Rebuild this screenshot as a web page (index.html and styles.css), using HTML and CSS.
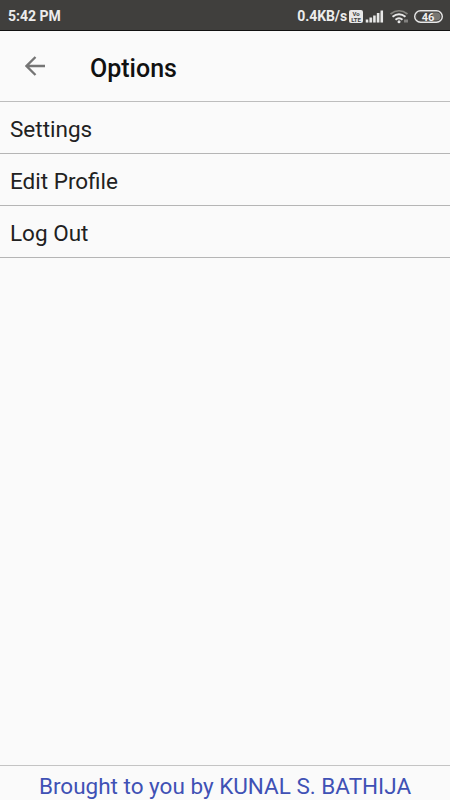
FILE: index.html
```html
<!DOCTYPE html>
<html lang="en">
<head>
<meta charset="utf-8">
<title>Options</title>
<link rel="stylesheet" href="styles.css">
</head>
<body>
<div class="status">
  <span class="time">5:42 PM</span>
  <span class="speed">0.4KB/s</span>
  <svg class="icons" width="95" height="30" viewBox="348 0 95 30">
    <rect x="349" y="9" width="14" height="13" rx="2" fill="#e8e8e8"/>
    <text class="volte"><tspan x="356" y="14.700">Vo</tspan><tspan x="356" y="20.900">LTE</tspan></text>
    <path d="M366 21.500L383 9.500v12z" fill="#85847f" opacity=".35"/>
    <path d="M367 18.500v3M370.700 16.500v5M374.400 14.500v7M378.100 12v9.500M381.800 9.500v12" stroke="#e8e8e8" stroke-width="2.500"/>
    <path d="M390.500 13q8.500-6.500 17 0" fill="none" stroke="#85847f" stroke-width="1.700"/>
    <path d="M392.500 15.800q6.500-5 13 0M395.500 18.800q3.500-3 7 0" fill="none" stroke="#e8e8e8" stroke-width="2"/>
    <circle cx="399" cy="20.700" r="1.500" fill="#e8e8e8"/>
    <path d="M405 18.500v3M407 18.500v3" stroke="#c4c4c2" stroke-width="1"/>
    <rect x="416.500" y="11.500" width="24" height="8" rx="4" fill="#777672"/>
    <path d="M420.500 11.500h12v8h-12a4 4 0 0 1 0-8z" fill="#403f3d"/>
    <rect x="414.700" y="9.700" width="27.600" height="11.600" rx="5.800" fill="none" stroke="#e8e8e8" stroke-width="1.400"/>
    <text x="428" y="19.500" class="battery">46</text>
  </svg>
</div>
<header class="header">
  <svg class="back" width="20" height="20" viewBox="0 0 20 20"><path d="M20 10H2M10.500 1L1.500 10l9 9" fill="none" stroke="#757575" stroke-width="2.300"/></svg>
  <h1 class="title">Options</h1>
</header>
<ul class="list">
  <li class="item">Settings</li>
  <li class="item">Edit Profile</li>
  <li class="item">Log Out</li>
</ul>
<footer class="footer">Brought to you by KUNAL S. BATHIJA</footer>
</body>
</html>
```

FILE: styles.css
```css
* { box-sizing: border-box; }
body { margin: 0; height: 800px; display: flex; flex-direction: column; overflow: hidden; background: #fafafa; color: #212121; font-family: Roboto, sans-serif; }
.status { display: flex; height: 31px; padding: 2px 7px 0 8px; align-items: center; background: #403f3d; border-bottom: 1px solid #111; color: #ececec; font-size: 14px; font-weight: 700; }
.speed { margin-left: auto; margin-right: 1px; letter-spacing: -0.100px; }
.icons { flex: none; }
.volte { font-size: 6px; font-weight: 700; text-anchor: middle; fill: #403f3d; }
.battery { font-size: 11px; font-weight: 700; text-anchor: middle; fill: #f0f0f0; }
.header { display: flex; height: 71px; padding-left: 25px; align-items: center; border-bottom: 1px solid #bdbdbd; }
.back { flex: none; }
.title { margin: 4px 0 0 45px; font-size: 25px; font-weight: 500; color: #111; }
.list { margin: 0; padding: 0; list-style: none; }
.item { display: flex; height: 52px; padding: 2px 10px 0; align-items: center; border-bottom: 1px solid #b5b5b5; font-size: 22.500px; }
.footer { margin-top: auto; height: 35px; padding-top: 6px; border-top: 1px solid #c4c4c4; color: #3f51b5; font-size: 22.500px; text-align: center; white-space: nowrap; line-height: 28px; }
```
